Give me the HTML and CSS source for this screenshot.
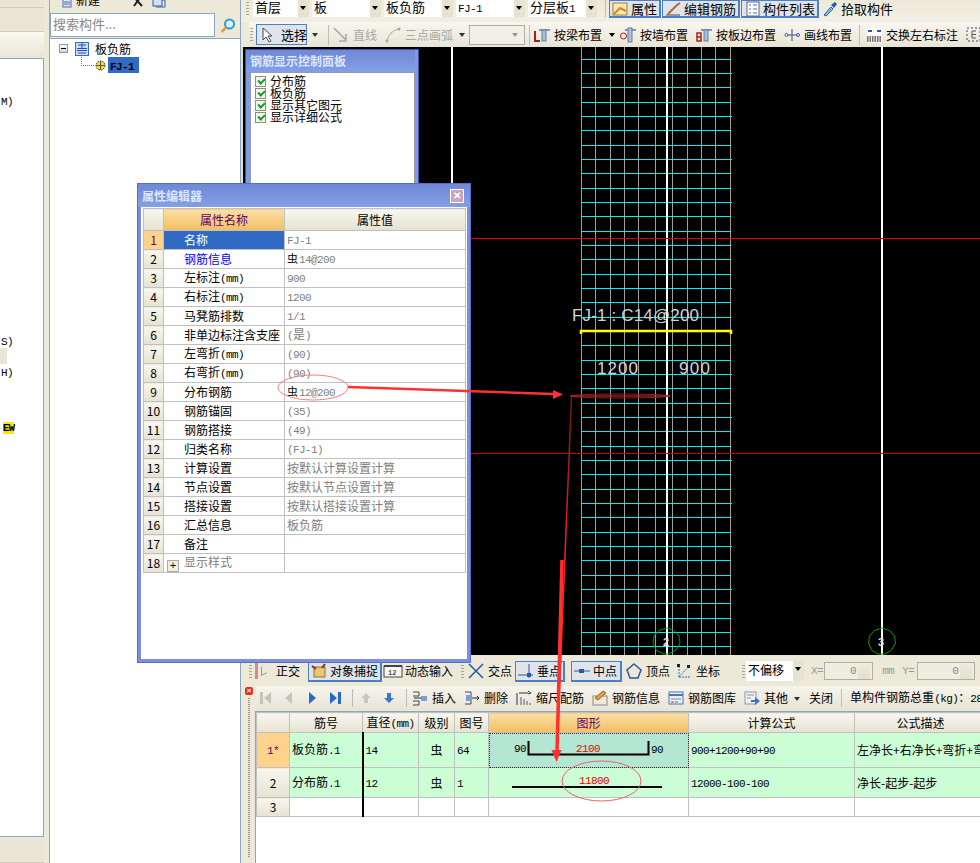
FILE: index.html
```html
<!DOCTYPE html>
<html lang="zh">
<head>
<meta charset="utf-8">
<title>钢筋编辑</title>
<link rel="stylesheet" href="styles.css">
</head>
<body>
<div class="app">
  <aside class="left">
    <div class="band b1"></div>
    <div class="band b2"></div>
    <div class="band b3"></div>
    <div class="frags">
      <div class="frag f-m"><span class="m">(M)</span></div>
      <div class="frag f-s"><span class="m">(S)</span></div>
      <div class="frag-hi"></div>
      <div class="frag f-h"><span class="m">(H)</span></div>
      <div class="frag f-ew"><span class="ew">EW</span></div>
    </div>
    <div class="band b4"></div>
  </aside>

  <section class="tree-col">
    <div class="tree-tools">
      <svg class="i12" viewBox="0 0 10 10"><rect x="1" y="-5" width="8" height="13" fill="#dfe8f8" stroke="#4a6fb5"/><path d="M2 3H8M2 5H8" stroke="#4a6fb5"/></svg>
      <span class="tt-new">新建</span><span class="tt-dot">·</span>
      <svg class="i14" viewBox="0 0 14 10"><path d="M2 -4L12 7M12 -4L4 7" stroke="#222" stroke-width="2" fill="none"/></svg>
      <svg class="i14 tt-doc" viewBox="0 0 14 10"><rect x="1" y="-4" width="9" height="11" fill="#cfe0f7" stroke="#2d5fae"/><path d="M10 1H13V8H4" fill="none" stroke="#2d5fae"/></svg>
    </div>
    <div class="search">
      <div class="search-input">搜索构件...</div>
      <div class="search-btn">
        <svg width="16" height="16" viewBox="0 0 16 16"><circle cx="9.5" cy="6" r="4.5" fill="#d8f2ff" stroke="#2e9ad8" stroke-width="2"/><path d="M6 9.500L1.500 14" stroke="#e0a030" stroke-width="2.500"/></svg>
      </div>
    </div>
    <div class="tree">
      <div class="node">
        <span class="minus"></span>
        <svg class="node-ico" width="14" height="14" viewBox="0 0 14 14"><rect x=".5" y=".5" width="13" height="13" fill="#c8dcf8" stroke="#3a6cc0"/><path d="M2 6.500H12M2 8.500H12M7 1V6M3 3H11M3 11H11" stroke="#2050b0" fill="none"/></svg>
        <span class="node-t">板负筋</span>
      </div>
      <div class="node n2">
        <span class="dots"></span>
        <svg class="gear" width="11" height="11" viewBox="0 0 11 11"><circle cx="5.500" cy="5.500" r="4.500" fill="#ffe020" stroke="#333" stroke-dasharray="1.500 1"/><path d="M1 5.500H10M5.500 1V10" stroke="#555"/></svg>
        <span class="sel"><span class="m">FJ-1</span></span>
      </div>
    </div>
  </section>

  <main class="main">
    <div class="tb1">
      <span class="grip"></span>
      <span class="combo c46"><span class="combo-t">首层</span><span class="arrow"></span></span>
      <span class="combo c58"><span class="combo-t">板</span><span class="arrow"></span></span>
      <span class="combo c58"><span class="combo-t">板负筋</span><span class="arrow"></span></span>
      <span class="combo c58"><span class="combo-t"><span class="m">FJ-1</span></span><span class="arrow"></span></span>
      <span class="combo c58"><span class="combo-t">分层板<span class="m">1</span></span><span class="arrow"></span></span>
      <span class="sep"></span>
      <span class="btn on"><svg class="ico" viewBox="0 0 16 16"><rect x="1" y="2" width="14" height="12" fill="#fbe8b8" stroke="#a08030"/><path d="M2 13L8 7L14 10" fill="none" stroke="#e08020" stroke-width="2"/></svg>属性</span>
      <span class="btn on"><svg class="ico" viewBox="0 0 16 16"><path d="M1 14H15" stroke="#444"/><path d="M3 13L12 4L15 2" stroke="#c06030" stroke-width="2" fill="none"/></svg>编辑钢筋</span>
      <span class="btn on"><svg class="ico" viewBox="0 0 16 16"><rect x="3" y="1" width="12" height="14" fill="#fff" stroke="#667"/><path d="M5 4H7M9 4H13M5 8H7M9 8H13M5 12H7M9 12H13" stroke="#3a6cc0"/></svg>构件列表</span>
      <span class="btn"><svg class="ico" viewBox="0 0 16 16"><path d="M2 14L9 6L11 8L4 15Z" fill="#8ab8ee" stroke="#2858a8"/><path d="M9 4L12 7L15 3L13 1Z" fill="#2858a8"/></svg>拾取构件</span>
    </div>

    <div class="tb2">
      <span class="grip"></span>
      <span class="btn sel-btn"><svg class="ico" viewBox="0 0 16 16"><path d="M4 1V13L7 10L10 15L12 14L9 9H13Z" fill="#fff" stroke="#445"/></svg><span class="pad">选择</span></span>
      <span class="drop d1"></span>
      <span class="sep"></span>
      <span class="tool off"><svg class="ico" viewBox="0 0 16 16"><path d="M1 1L13 13M13 7V14H6" fill="none" stroke="#a8a8a0" stroke-width="1.500"/></svg>直线</span>
      <span class="tool off"><svg class="ico" viewBox="0 0 16 16"><path d="M2 14Q4 4 14 2" fill="none" stroke="#a8a8a0"/><circle cx="2" cy="14" r="1.500" fill="#a8a8a0"/><circle cx="14" cy="2" r="1.500" fill="#a8a8a0"/></svg>三点画弧</span>
      <span class="drop d2"></span>
      <span class="blank"><span class="arrow-s"></span></span>
      <span class="sep"></span>
      <span class="tool"><svg class="ico" viewBox="0 0 16 16"><path d="M1 4V14H6" fill="none" stroke="#a02020" stroke-width="2"/><path d="M5 3H16" stroke="#223388"/><rect x="8" y="3" width="4" height="11" fill="#a8c0dc" stroke="#6080a0"/></svg>按梁布置</span>
      <span class="drop d3"></span>
      <span class="tool t2"><svg class="ico" viewBox="0 0 16 16"><circle cx="3.500" cy="9" r="3" fill="none" stroke="#a02020"/><path d="M5 3H16" stroke="#223388"/><rect x="8" y="1" width="4" height="14" fill="#a8c0dc" stroke="#6080a0"/></svg>按墙布置</span>
      <span class="tool t2"><svg class="ico" viewBox="0 0 16 16"><path d="M1 6H5V14H1ZM1 10H5" fill="none" stroke="#a02020" stroke-width="1.500"/><path d="M5 3H16" stroke="#223388"/><rect x="8" y="3" width="4" height="11" fill="#a8c0dc" stroke="#6080a0"/></svg>按板边布置</span>
      <span class="tool t2"><svg class="ico" viewBox="0 0 16 16"><path d="M3 8H14M8 2V14" stroke="#3a5090" fill="none"/><circle cx="2.500" cy="8" r="1.500" fill="#fff" stroke="#3a5090"/><circle cx="14" cy="8" r="1.500" fill="#fff" stroke="#3a5090"/></svg>画线布置</span>
      <span class="sep s2"></span>
      <span class="tool t2"><svg class="ico" viewBox="0 0 16 16"><rect x="1" y="1" width="15" height="15" fill="#fff"/><path d="M2 4H6M11 4H15" stroke="#2858a8" stroke-width="2"/><rect x="1" y="9" width="14" height="6" fill="#777"/><path d="M3 9V15M5.500 9V15M8 9V15M10.500 9V15M13 9V15" stroke="#eee"/></svg>交换左右标注</span>
      <span class="tool t2"><svg class="ico" viewBox="0 0 16 16"><rect x="1" y="1" width="13" height="13" fill="none" stroke="#3040a0" stroke-dasharray="2 2"/><path d="M6 4H10M6 4V11M6 7.500H10M6 11H10" stroke="#555" fill="none"/></svg>交换</span>
    </div>

    <div class="canvas">
      <svg class="cad" width="737" height="608" viewBox="243 47 737 608">
        <rect x="243" y="47" width="737" height="608" fill="#000"/>
        <path d="M581.500 47V655M595.500 47V655M610.500 47V655M624.500 47V655M638.500 47V655M655.500 47V655M672.500 47V655M687.500 47V655M701.500 47V655M715.500 47V655M730.500 47V655" stroke="#a89c98"/>
        <path stroke="#00f0f0" d="M581 59.500H731M581 73.500H732M581 87.500H731M581 102.500H731M581 116.500H732M581 130.500H731M581 145.500H731M581 159.500H732M581 173.500H731M581 188.500H731M581 202.500H732M581 216.500H731M581 231.500H731M581 245.500H731M581 259.500H731M581 274.500H731M581 288.500H732M581 302.500H731M581 317.500H731M581 331.500H731M581 345.500H731M581 360.500H731M581 374.500H732M581 388.500H731M581 403.500H731M581 417.500H732M581 431.500H731M581 446.500H731M581 460.500H732M581 474.500H731M581 489.500H731M581 503.500H732M581 517.500H731M581 532.500H731M581 546.500H732M581 560.500H731M581 575.500H731M581 589.500H732M581 603.500H731M581 618.500H731M581 632.500H731M581 646.500H731"/>
        <path d="M452 47V655M667 47V655M882 47V655" stroke="#fff" stroke-width="2"/>
        <path d="M470 238.500H980" stroke="#e00000"/>
        <path d="M470 453.500H980" stroke="#c80808"/>
        <path d="M581 334V331H731V334" fill="none" stroke="#ffff00" stroke-width="2.500"/>
        <text x="572" y="321" class="cad-t" textLength="127">FJ-1 : C14@200</text>
        <text x="597" y="374" class="cad-t" textLength="41">1200</text>
        <text x="679" y="374" class="cad-t" textLength="31">900</text>
        <path d="M666.500 628L674 630.500L679 636L680 643L676 650L669 654H663L656 650L653 643L654 636L659 630.500Z" fill="none" stroke="#00a000"/>
        <path d="M882 628L889.500 630.500L894.500 636L895.500 643L891.500 650L885 654H878L871.500 650L868.500 643L869.500 636L874.500 630.500Z" fill="none" stroke="#00a000"/>
        <text x="663" y="646" class="cad-n">2</text>
        <text x="878" y="646" class="cad-n">3</text>
      </svg>
      <div class="panel">
        <div class="win-title">钢筋显示控制面板</div>
        <div class="panel-list">
          <label class="chk"><span class="box"></span>分布筋</label>
          <label class="chk"><span class="box"></span>板负筋</label>
          <label class="chk"><span class="box"></span>显示其它图元</label>
          <label class="chk"><span class="box"></span>显示详细公式</label>
        </div>
      </div>
    </div>

    <div class="status">
      <span class="grip g2"></span>
      <span class="st-red"></span>
      <span class="tool st"><svg class="ico i-s" viewBox="0 0 16 16"><path d="M4 3V13L10 10" fill="none" stroke="#889"/></svg>正交</span>
      <span class="btn on st-on"><svg class="ico" viewBox="0 0 16 16"><rect x="3" y="4" width="11" height="10" fill="#e8c870" stroke="#907030"/><path d="M1 3L5 6M14 1L11 5" stroke="#a02020" stroke-width="2"/></svg>对象捕捉</span>
      <span class="tool st st3"><svg class="ico i-w" viewBox="0 0 20 16"><rect x="1" y="3" width="18" height="11" fill="#f8f8f0" stroke="#444"/><path d="M1 3H19" stroke="#444" stroke-width="2"/><text x="5" y="12" class="ico-t">12</text></svg>动态输入</span>
      <span class="grip g3"></span>
      <span class="tool st st4"><svg class="ico" viewBox="0 0 16 16"><path d="M1 1L15 15M15 1L1 15" stroke="#2858a8" stroke-width="1.500"/></svg>交点</span>
      <span class="btn on st-on"><svg class="ico" viewBox="0 0 16 16"><path d="M0 12H15M11 1V15" stroke="#2858a8"/><rect x="9" y="10" width="4" height="4" fill="#2858a8"/></svg>垂点</span>
      <span class="btn on st-on st5"><svg class="ico" viewBox="0 0 16 16"><path d="M0 8H16" stroke="#2858a8"/><rect x="5" y="6" width="5" height="4" fill="#2858a8"/></svg>中点</span>
      <span class="tool st st6"><svg class="ico" viewBox="0 0 16 16"><path d="M8 1L15 7L12 15H4L1 7Z" fill="none" stroke="#2858a8" stroke-width="1.500"/></svg>顶点</span>
      <span class="tool st st7"><svg class="ico" viewBox="0 0 16 16"><path d="M3 14H15M3 14V2M3 14L13 3" stroke="#3070c0" stroke-dasharray="2 1" fill="none"/><rect x="1" y="1" width="3" height="3" fill="#223"/><rect x="11" y="2" width="3" height="3" fill="#223"/></svg>坐标</span>
      <span class="grip g4"></span>
      <span class="combo c58 offs"><span class="combo-t">不偏移</span><span class="arrow"></span></span>
      <span class="lbl l-x m">X=</span>
      <span class="num"><span class="m">0</span><span class="spin"></span></span>
      <span class="lbl l-mm m">mm</span>
      <span class="lbl l-y m">Y=</span>
      <span class="num"><span class="m">0</span><span class="spin"></span></span>
      <span class="lbl l-mm2 m">mm</span>
    </div>

    <div class="rebar">
      <div class="gutter">
        <span class="close-red">×</span>
        <span class="dotted"></span>
      </div>
      <div class="rebar-body">
        <div class="tb3">
          <svg class="nav" viewBox="0 0 16 16"><rect x="2" y="2" width="3" height="12" fill="#c4c4bc"/><path d="M13 2V14L6 8Z" fill="#c4c4bc"/></svg>
          <svg class="nav" viewBox="0 0 16 16"><path d="M11 2V14L4 8Z" fill="#c4c4bc"/></svg>
          <svg class="nav" viewBox="0 0 16 16"><path d="M5 2V14L12 8Z" fill="#2c68c8"/></svg>
          <svg class="nav" viewBox="0 0 16 16"><path d="M3 2V14L10 8Z" fill="#2c68c8"/><rect x="11" y="2" width="3" height="12" fill="#2c68c8"/></svg>
          <span class="sep s3"></span>
          <svg class="nav" viewBox="0 0 16 16"><path d="M8 3L13 8H10V13H6V8H3Z" fill="#c8c8c0"/></svg>
          <svg class="nav" viewBox="0 0 16 16"><path d="M8 13L13 8H10V3H6V8H3Z" fill="#3c74d0"/></svg>
          <span class="sep s3"></span>
          <span class="tool t3"><svg class="ico" viewBox="0 0 16 16"><path d="M1 2H7V6H1M1 11H7V15H1" fill="none" stroke="#445"/><rect x="9" y="6" width="6" height="5" fill="#78a0d8"/><path d="M2 8H9" stroke="#223"/></svg>插入</span>
          <span class="tool t3"><svg class="ico" viewBox="0 0 16 16"><path d="M1 2H7V14H1" fill="none" stroke="#445"/><rect x="2" y="5" width="6" height="6" fill="#78a0d8"/><path d="M8 8H15M13 6L15 8L13 10" fill="none" stroke="#223"/></svg>删除</span>
          <span class="tool t3"><svg class="ico" viewBox="0 0 16 16"><path d="M1 3V15M3 3H12M12 1L15 3L12 4" fill="none" stroke="#333"/><path d="M5 7V15M8 9V15M11 11V15M14 13V15" stroke="#889" stroke-width="1.500"/></svg>缩尺配筋</span>
          <span class="tool t3"><svg class="ico" viewBox="0 0 16 16"><rect x="1" y="6" width="14" height="9" fill="#eee8d8" stroke="#888"/><path d="M3 8L11 1L14 3L6 10Z" fill="#e0a050" stroke="#a06020"/></svg>钢筋信息</span>
          <span class="tool t3"><svg class="ico" viewBox="0 0 16 16"><rect x="1" y="2" width="14" height="12" fill="#e8f0fb" stroke="#4878b8"/><path d="M1 5H15" stroke="#4878b8" stroke-width="2"/><path d="M3 9H13" stroke="#888"/><path d="M3 12H6" stroke="#d02020"/><path d="M7 12H10" stroke="#20a020"/></svg>钢筋图库</span>
          <span class="tool t3"><svg class="ico" viewBox="0 0 16 16"><rect x="1" y="2" width="11" height="12" fill="#f0f0f0" stroke="#8898b0"/><path d="M3 5H10M3 8H7" stroke="#8898b0"/><path d="M7 10H11V7L16 11L11 15V12H7Z" fill="#3c70d0"/></svg>其他</span>
          <span class="drop d4"></span>
          <span class="tool t3"><span>关闭</span></span>
          <span class="sep s4"></span>
          <span class="total">单构件钢筋总重<span class="m">(kg)</span>：<span class="m">286.</span></span>
        </div>
        <div class="grid-wrap">
          <table class="grid">
            <colgroup><col class="g0"><col class="g1"><col class="g2c"><col class="g3c"><col class="g4c"><col class="g5"><col class="g6"><col class="g7"></colgroup>
            <tr class="gh"><th></th><th>筋号</th><th>直径<span class="m">(mm)</span></th><th>级别</th><th>图号</th><th class="oh">图形</th><th>计算公式</th><th>公式描述</th></tr>
            <tr class="r1"><td class="rn ro"><span class="m">1*</span></td><td>板负筋<span class="m">.1</span></td><td class="vb"><span class="m">14</span></td><td class="c">虫</td><td><span class="m">64</span></td>
              <td class="fig figa"><svg width="200" height="34" viewBox="488 731 200 34"><text x="513" y="750" class="f-k">90</text><path d="M527.500 739V752.500H647.500V739" fill="none" stroke="#000" stroke-width="2"/><text x="575" y="750" class="f-r">2100</text><text x="650" y="751" class="f-k">90</text></svg></td>
              <td><span class="m">900+1200+90+90</span></td><td>左净长+右净长+弯折+弯</td></tr>
            <tr class="r2"><td class="rn">2</td><td>分布筋<span class="m">.1</span></td><td class="vb"><span class="m">12</span></td><td class="c">虫</td><td><span class="m">1</span></td>
              <td class="fig"><svg width="200" height="29" viewBox="488 765 200 29"><path d="M511 784H661" stroke="#000" stroke-width="2"/><text x="578" y="781" class="f-r">11800</text></svg></td>
              <td><span class="m">12000-100-100</span></td><td>净长-起步-起步</td></tr>
            <tr class="r3"><td class="rn">3</td><td></td><td class="vb"></td><td></td><td></td><td></td><td></td><td></td></tr>
          </table>
        </div>
      </div>
    </div>
  </main>

  <div class="dialog">
    <div class="win-title dlg-title">属性编辑器<span class="x">✕</span></div>
    <table class="props">
      <colgroup><col class="p0"><col class="p1"><col class="p2"></colgroup>
      <tr class="ph"><th></th><th class="oh">属性名称</th><th>属性值</th></tr>
      <tr><td class="rn ro">1</td><td class="pn psel">名称</td><td class="pv"><span class="m">FJ-1</span></td></tr>
      <tr><td class="rn">2</td><td class="pn blue">钢筋信息</td><td class="pv"><span class="sym">虫</span><span class="m">14@200</span></td></tr>
      <tr><td class="rn">3</td><td class="pn">左标注<span class="m">(mm)</span></td><td class="pv"><span class="m">900</span></td></tr>
      <tr><td class="rn">4</td><td class="pn">右标注<span class="m">(mm)</span></td><td class="pv"><span class="m">1200</span></td></tr>
      <tr><td class="rn">5</td><td class="pn">马凳筋排数</td><td class="pv"><span class="m">1/1</span></td></tr>
      <tr><td class="rn">6</td><td class="pn">非单边标注含支座</td><td class="pv"><span class="m">(</span>是<span class="m">)</span></td></tr>
      <tr><td class="rn">7</td><td class="pn">左弯折<span class="m">(mm)</span></td><td class="pv"><span class="m">(90)</span></td></tr>
      <tr><td class="rn">8</td><td class="pn">右弯折<span class="m">(mm)</span></td><td class="pv"><span class="m">(90)</span></td></tr>
      <tr><td class="rn">9</td><td class="pn">分布钢筋</td><td class="pv"><span class="sym">虫</span><span class="m">12@200</span></td></tr>
      <tr><td class="rn">10</td><td class="pn">钢筋锚固</td><td class="pv"><span class="m">(35)</span></td></tr>
      <tr><td class="rn">11</td><td class="pn">钢筋搭接</td><td class="pv"><span class="m">(49)</span></td></tr>
      <tr><td class="rn">12</td><td class="pn">归类名称</td><td class="pv"><span class="m">(FJ-1)</span></td></tr>
      <tr><td class="rn">13</td><td class="pn">计算设置</td><td class="pv">按默认计算设置计算</td></tr>
      <tr><td class="rn">14</td><td class="pn">节点设置</td><td class="pv">按默认节点设置计算</td></tr>
      <tr><td class="rn">15</td><td class="pn">搭接设置</td><td class="pv">按默认搭接设置计算</td></tr>
      <tr><td class="rn">16</td><td class="pn">汇总信息</td><td class="pv">板负筋</td></tr>
      <tr><td class="rn">17</td><td class="pn">备注</td><td class="pv"></td></tr>
      <tr><td class="rn">18</td><td class="pn gray"><span class="plus">+</span>显示样式</td><td class="pv"></td></tr>
    </table>
  </div>

  <svg class="marks" width="980" height="863" viewBox="0 0 980 863">
    <defs>
      <linearGradient id="fade" gradientUnits="userSpaceOnUse" x1="0" y1="397" x2="0" y2="560">
        <stop offset="0" stop-color="#701818"/>
        <stop offset="1" stop-color="#ff2020"/>
      </linearGradient>
    </defs>
    <ellipse cx="313" cy="387.500" rx="35" ry="12.500" fill="none" stroke="#f08080"/>
    <path d="M348 387L554 394" stroke="#ff3030" stroke-width="2.500" fill="none"/>
    <path d="M563 394.500L553 390V399Z" fill="#ff3030"/>
    <ellipse cx="620" cy="396" rx="50" ry="2" fill="none" stroke="#8a2020"/>
    <path d="M670 396H572" stroke="#d03030"/>
    <path d="M571.500 397L557 752" stroke="url(#fade)" stroke-width="1.500"/>
    <path d="M562 560L557 752" stroke="#ff3030" stroke-width="3.500"/>
    <path d="M556.500 762L551.500 750H561.500Z" fill="#ff3030"/>
    <ellipse cx="601.500" cy="781" rx="39.500" ry="20" fill="none" stroke="#f06060"/>
  </svg>
</div>
</body>
</html>
```
FILE: styles.css
```css
* { box-sizing: border-box; }
html, body { margin: 0; padding: 0; }
body { width: 980px; height: 863px; overflow: hidden; background: #ece9d8; }
.app {
  position: relative; display: flex; width: 980px; height: 863px; overflow: hidden;
  background: #ece9d8; color: #000;
  font: 12px/14px "Noto Sans CJK SC", "Liberation Sans", sans-serif;
  white-space: nowrap;
}
.m { font-family: "Liberation Mono", monospace; font-size: 11px; letter-spacing: -.6px; }
svg { display: block; flex: none; }

/* left sliver */
.left { width: 49px; flex: none; display: flex; flex-direction: column; background: #ece9d8; padding-right: 5px; }
.band { flex: none; }
.b1 { height: 8px; background: #e9e6d6; border-bottom: 1px solid #cfcdbd; }
.b2 { height: 24px; background: #e9e6d6; border-bottom: 1px solid #cfcdbd; }
.b3 { height: 26px; background: linear-gradient(#faf8f0, #e9e6d6); }
.b4 { height: 24px; margin-top: 2px; background: #e9e6d6; border-bottom: 1px solid #cfcdbd; }
.frags { flex: 1; background: #fff; border: 1px solid #8ba6c1; border-width: 1px 1px 1px 0; overflow: hidden; display: flex; flex-direction: column; align-items: flex-start; }
.frag { width: 13px; flex: none; text-align: right; direction: rtl; height: 14px; }
.frag span { direction: ltr; unicode-bidi: bidi-override; }
.f-m { margin-top: 34px; }
.f-s { margin-top: 226px; }
.frag-hi { width: 7px; height: 16px; background: #e8e5d6; flex: none; margin-top: 1px; }
.f-h { margin-top: 0; }
.f-ew { margin-top: 41px; width: 14px; }
.ew { background: #ffe600; font: bold 11px/11px "Liberation Mono", monospace; letter-spacing: -1px; }

/* tree column */
.tree-col { width: 192px; flex: none; display: flex; flex-direction: column; border-left: 1px solid #8ba6c1; border-right: 1px solid #8ba6c1; background: #fff; }
.tree-tools { height: 13px; flex: none; display: flex; align-items: flex-end; padding: 0 0 7px 12px; overflow: hidden; background: #ece9d8; }
.tree-tools .i12 { width: 10px; height: 10px; margin-bottom: -3px; }
.tree-tools .i14 { width: 14px; height: 10px; margin-bottom: -3px; }
.tt-new { margin-left: 4px; line-height: 14px; margin-bottom: -1px; }
.tt-dot { margin: 0 12px 0 6px; }
.tt-doc { margin-left: 8px; }
.search { height: 25px; flex: none; display: flex; background: #ece9d8; }
.search-input { width: 165px; margin-top: 0; height: 24px; background: #fff; border: 1px solid #8ba6c1; padding: 3px 2px; color: #888; font-size: 13px; }
.search-btn { flex: 1; display: flex; align-items: center; justify-content: center; }
.tree { flex: 1; border-top: 1px solid #8ba6c1; padding: 2px 0 0 8px; }
.node { display: flex; align-items: center; height: 15px; font-size: 12px; }
.minus { width: 9px; height: 9px; border: 1px solid #7f9db9; background: linear-gradient(#fff, #d8d4c4); position: relative; margin-left: 1px; }
.minus::after { content: ""; display: block; width: 5px; height: 1px; background: #000; margin: 3px 1px; }
.node-ico { margin-left: 7px; }
.node-t { margin-left: 6px; }
.n2 { height: 16px; margin-top: 1px; }
.dots { width: 13px; height: 9px; margin: -8px 0 0 23px; border-left: 1px dotted #777; border-bottom: 1px dotted #777; }
.gear { margin: 0 1px; }
.sel { display: block; margin-left: 1px; width: 31px; height: 16px; background: #316ac5; line-height: 16px; padding-left: 2px; font-weight: bold; }

/* main */
.main { flex: 1; min-width: 0; display: flex; flex-direction: column; background: #ece9d8; }
.grip { width: 3px; height: 14px; flex: none; margin: 0 4px 0 6px; background: repeating-linear-gradient(#aaa69a 0 1px, transparent 1px 3px); }
.tb1 { height: 22px; flex: none; display: flex; align-items: flex-start; background: linear-gradient(#ece9d8, #f2f0e6); }
.tb1 .grip { margin-top: 2px; margin-right: 4px; margin-left: 5px; }
.tb1 .combo { margin-right: 3px; }
.combo { display: flex; height: 17px; flex: none; background: #fff; }
.combo-t { flex: 1; padding: 0 2px; line-height: 14px; font-size: 13px; overflow: hidden; }
.c46 { width: 56px; }
.c58 { width: 69px; }
.arrow { width: 11px; flex: none; background: #e6e3d3; position: relative; }
.arrow::after { content: ""; position: absolute; left: 2px; top: 6px; border: 3.500px solid transparent; border-top: 4px solid #000; }
.sep { width: 1px; height: 17px; flex: none; background: #c0bdad; margin: 0 3px 0 5px; }
.btn { display: flex; align-items: center; gap: 3px; height: 18px; flex: none; padding: 0 2px; font-size: 13px; margin-right: 1px; }
.btn.on { border: 2px solid #4a80c8; border-width: 1px 2px 2px 1px; background: #dfe4ea; }
.ico { width: 16px; height: 16px; flex: none; }

.tb2 { height: 25px; flex: none; display: flex; align-items: center; padding-right: 0; background: linear-gradient(#f8f6ee, #e8e5d6); overflow: hidden; margin-left: 8px; }
.tb2 .grip { margin: 0 2px 0 1px; }
.sel-btn { height: 21px; width: 51px; border: 1px solid #4a80c8; background: #dfe4ea; padding: 0 2px; margin-left: 1px; gap: 0; }
.sel-btn .pad { margin-left: 6px; }
.tool { display: flex; align-items: center; gap: 4px; flex: none; font-size: 12px; margin-right: 8px; }
.off { color: #a8a8a0; }
.drop { width: 0; height: 0; flex: none; border: 3.500px solid transparent; border-top: 4px solid #333; margin-top: 4px; }
.d1 { margin: 4px 6px 0 4px; }
.d2 { margin: 4px 4px 0 -2px; }
.d3 { margin: 4px 5px 0 -1px; border-top-color: #000; }
.d4 { margin: 4px 9px 0 -2px; }
.blank { width: 56px; height: 20px; flex: none; border: 1px solid #b0ae9e; background: #f2f0e6; position: relative; margin-right: 0; }
.arrow-s { position: absolute; right: 6px; top: 7px; border: 3.500px solid transparent; border-top: 4px solid #999; }
.tb2 .sep { height: 20px; margin: 0 4px; }
.tb2 .s2 { margin: 0 6px 0 -1px; }
.t2 { margin-right: 8px; gap: 4px; }

.canvas { height: 608px; flex: none; position: relative; padding-left: 2px; background: #e4e1d2; }
.cad-t { font: 17px "Liberation Sans", sans-serif; fill: #d4d4d4; }
.cad-n { font: bold 11px "Liberation Sans", sans-serif; fill: #ddd; }

.win-title { height: 22px; line-height: 22px; padding-left: 4px; color: #dde6ff; font-weight: bold; font-size: 12px; background: linear-gradient(#6f88d8, #83a0e4); }
.panel { position: absolute; left: 4px; top: 2px; width: 174px; height: 150px; background: #7f9be2; border: 1px solid #3f4fb0; padding: 0 3px 0 0; display: flex; flex-direction: column; }
.panel-list { flex: 1; margin-left: 4px; background: #fff; border: 1px solid #99a; padding: 2px 0 0 4px; }
.chk { display: flex; align-items: center; gap: 4px; height: 12px; line-height: 12px; }
.box { width: 11px; height: 11px; flex: none; border: 1px solid #8f8f80; background: #f4f4ec; position: relative; }
.box::after { content: ""; position: absolute; left: 2px; top: 1px; width: 5px; height: 3px; border-left: 2px solid #10a020; border-bottom: 2px solid #10a020; transform: rotate(-45deg); }

.status { height: 29px; flex: none; display: flex; align-items: center; padding-top: 3px; background: #ece9d8; }
.status .grip { margin-top: 2px; }
.g2 { margin-left: 8px; margin-right: 3px; }
.g3 { margin: 0 4px 0 8px; }
.g4 { margin: 0 1px 0 14px; }
.st-red { width: 3px; height: 16px; background: #d88; flex: none; margin-right: 0; }
.st { margin-right: 8px; }
.i-s { width: 14px; }
.st3 { margin-left: 0; margin-right: 0; gap: 2px; }
.i-w { width: 20px; }
.ico-t { font: 7px "Liberation Mono", monospace; fill: #000; }
.st4 { margin-right: 3px; }
.st-on { height: 21px; font-size: 12px; }
.st5 { margin-left: 5px; width: 51px; }
.st6 { margin-left: 3px; }
.st7 { margin-left: -2px; }
.offs { width: 58px; height: 20px; }
.offs .combo-t { font-size: 12px; padding-top: 2px; }
.lbl { color: #999; flex: none; }
.l-x { margin: 0 1px 0 7px; }
.l-mm { margin: 0 8px 0 9px; }
.l-y { margin: 0 3px 0 0; }
.l-mm2 { margin-left: 5px; }
.num { width: 49px; height: 18px; flex: none; border: 1px solid #b0ae9e; display: flex; justify-content: flex-end; align-items: center; padding-right: 16px; color: #888; position: relative; background: #efece0; }
.spin { position: absolute; right: 2px; top: 0; width: 12px; height: 16px; background: linear-gradient(#efece0, #e2dfd0); }
.num + .lbl + .lbl + .num { width: 58px; }

.rebar { flex: 1; min-height: 0; display: flex; }
.gutter { width: 15px; flex: none; position: relative; padding-top: 3px; }
.close-red { display: block; margin-left: 4px; width: 8px; height: 8px; border-radius: 2px; background: #e83020; color: #fff; font: bold 8px/8px "Liberation Sans", sans-serif; text-align: center; }
.dotted { display: block; width: 2px; height: 160px; margin: 3px 0 0 7px; background: repeating-linear-gradient(#9a978a 0 1px, transparent 1px 2px); }
.rebar-body { flex: 1; min-width: 0; display: flex; flex-direction: column; }
.tb3 { height: 24px; margin-top: 2px; flex: none; display: flex; align-items: center; padding-left: 2px; background: linear-gradient(#f6f4ec, #e8e5d6); overflow: hidden; }
.nav { width: 16px; height: 16px; margin-right: 7px; }
.s3 { height: 18px; margin: 0 5px 0 2px; }
.t3 { margin-right: 8px; }
.s4 { height: 18px; margin: 0 8px 0 0; }
.total { flex: none; }

.grid-wrap { flex: 1; background: #fff; border-top: 1px solid #8ba6c1; border-left: 1px solid #8ba6c1; overflow: hidden; margin-top: 1px; margin-left: -1px; }
table { border-collapse: collapse; table-layout: fixed; }
.grid { width: 730px; }
.g0 { width: 33px; }
.g1 { width: 73px; }
.g2c { width: 56px; }
.g3c { width: 36px; }
.g4c { width: 34px; }
.g5 { width: 200px; }
.g6 { width: 166px; }
.g7 { width: 132px; }
th, td { border: 1px solid #c0c0c0; font-weight: normal; padding: 0 2px; overflow: hidden; }
th { background: linear-gradient(#f8f6ee, #e6e3d3); text-align: center; }
th.oh { background: linear-gradient(#fcdfa4, #f2be62); color: #600070; }
.gh { height: 20px; }
.r1 { height: 34px; }
.r2 { height: 29px; }
.r3 { height: 19px; }
.r1 td, .r2 td { background: #ccfed6; }
.grid td.rn, .props td.rn { text-align: center; background: linear-gradient(#f8f6ee, #e6e3d3); padding: 0; }
.grid td.ro, .props td.ro { background: #fdd28a; color: #600070; }
.vb { border-left: 2px solid #000; }
.c { text-align: center; }
td.fig { padding: 0; }
.grid .figa { background: #b4e6d4; outline: 1px dotted #333; outline-offset: -1px; }
.f-k { font: 11px "Liberation Mono", monospace; letter-spacing: -.6px; fill: #000; }
.f-r { font: 11px "Liberation Mono", monospace; letter-spacing: -.6px; fill: #f00000; }

/* floating dialog */
.dialog { position: absolute; left: 137px; top: 183px; width: 334px; height: 480px; background: #fff; border: 1px solid #5a6cc8; border-width: 1px; box-shadow: inset 0 0 0 3px #7a90dc; padding: 0 5px 0 5px; }
.dlg-title { margin: 0 -5px 1px -5px; height: 23px; display: flex; justify-content: space-between; align-items: center; padding: 0 4px 0 4px; }
.x { width: 14px; height: 14px; background: #c9a3c0; border: 1px solid #fff; color: #fff; font: bold 10px/12px "Liberation Sans", sans-serif; text-align: center; margin-right: 2px; }
.props { width: 322px; }
.p0 { width: 20px; }
.p1 { width: 121px; }
.p2 { width: 181px; }
.ph { height: 22px; }
.props tr { height: 19px; }
.props tr.ph { height: 22px; }
.pn { padding-left: 20px; }
.psel { background: #316ac5; color: #fff; }
.blue { color: #0000ff; }
.gray { color: #808080; padding-left: 3px; }
.pv { color: #808080; padding-left: 2px; }
.sym { color: #000; font-size: 11px; margin-right: 1px; }
.plus { display: inline-block; width: 12px; height: 12px; margin-right: 5px; border: 1px solid #aaa; background: #f0eee2; color: #000; font: 11px/10px "Liberation Mono", monospace; text-align: center; vertical-align: -2px; }

.marks { position: absolute; left: 0; top: 0; pointer-events: none; }
```
